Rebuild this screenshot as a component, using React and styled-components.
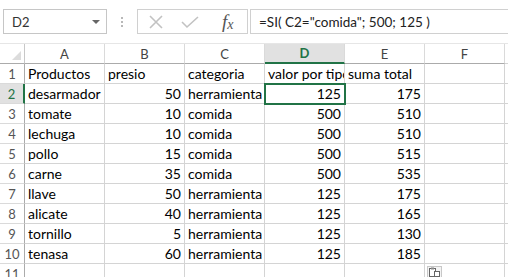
import React from 'react'
import styled, { createGlobalStyle } from 'styled-components'

const GlobalStyle = createGlobalStyle`
  html, body { margin: 0; padding: 0; background: #fff; }
  body { width: 508px; height: 277px; overflow: hidden; font-family: Lato, "Open Sans", sans-serif; }
`

const columns = ['A', 'B', 'C', 'D', 'E', 'F']

const rows = [
  ['Productos', 'presio', 'categoria', 'valor por tipo', 'suma total', ''],
  ['desarmador', 50, 'herramienta', 125, 175, ''],
  ['tomate', 10, 'comida', 500, 510, ''],
  ['lechuga', 10, 'comida', 500, 510, ''],
  ['pollo', 15, 'comida', 500, 515, ''],
  ['carne', 35, 'comida', 500, 535, ''],
  ['llave', 50, 'herramienta', 125, 175, ''],
  ['alicate', 40, 'herramienta', 125, 165, ''],
  ['tornillo', 5, 'herramienta', 125, 130, ''],
  ['tenasa', 60, 'herramienta', 125, 185, ''],
  ['', '', '', '', '', ''],
]

function App() {
  return (
    <Page>
      <GlobalStyle />
      <FormulaBar>
        <NameBox>
          <span>D2</span>
          <Caret />
        </NameBox>
        <Grip>
          <i /><i /><i />
        </Grip>
        <ActionBox>
          <Action>
            <svg width="18" height="14" viewBox="0 0 18 14">
              <path d="M3 1 L15 13 M15 1 L3 13" stroke="#c2c2c2" strokeWidth="1.6" fill="none" />
            </svg>
          </Action>
          <Action>
            <svg width="20" height="14" viewBox="0 0 20 14">
              <path d="M2 7 L7 12 L18 2" stroke="#c2c2c2" strokeWidth="1.6" fill="none" />
            </svg>
          </Action>
          <Fx>
            f<sub>x</sub>
          </Fx>
        </ActionBox>
        <FormulaInput>=SI( C2="comida"; 500; 125 )</FormulaInput>
      </FormulaBar>

      <Sheet>
        <Corner>
          <svg width="9" height="9" viewBox="0 0 9 9">
            <path d="M9 0 L9 9 L0 9 Z" fill="#dcdcdc" />
          </svg>
        </Corner>
        {columns.map((c) => (
          <ColHead key={c} $active={c === 'D'}>{c}</ColHead>
        ))}
        <Spacer />
        {rows.map((r, i) => (
          <React.Fragment key={i}>
            <RowHead $active={i === 1}>{i + 1}</RowHead>
            {r.map((v, j) => (
              <Cell key={j} $num={typeof v === 'number'}>
                {v}
              </Cell>
            ))}
            <Spacer />
          </React.Fragment>
        ))}
        <Selection />
        <PasteTag>
          <svg width="13" height="10" viewBox="0 0 13 10">
            <rect x="1.5" y="1.5" width="6" height="8" fill="#fff" stroke="#666" />
            <rect x="3" y="0.5" width="3" height="2" fill="#888" />
            <rect x="6.5" y="4.5" width="5" height="5" fill="#fff" stroke="#666" />
          </svg>
        </PasteTag>
      </Sheet>
    </Page>
  )
}

export default App

const Page = styled.div`
  width: 508px;
  height: 277px;
  overflow: hidden;
  background: #fff;
`

const FormulaBar = styled.div`
  height: 44px;
  display: flex;
  align-items: flex-start;
  padding-top: 9px;
  box-sizing: border-box;
  border-bottom: 1px solid #e6e6e6;
`

const NameBox = styled.div`
  margin-left: 3px;
  width: 104px;
  height: 25px;
  box-sizing: border-box;
  border: 1px solid #c6c6c6;
  display: flex;
  align-items: center;
  justify-content: space-between;
  padding: 0 6px 0 8px;
  font-size: 13px;
  color: #333;
`

const Caret = styled.span`
  width: 0;
  height: 0;
  border-left: 4px solid transparent;
  border-right: 4px solid transparent;
  border-top: 4px solid #666;
`

const Grip = styled.div`
  width: 30px;
  height: 25px;
  display: flex;
  flex-direction: column;
  align-items: center;
  justify-content: center;
  gap: 2px;
  i {
    width: 2px;
    height: 2px;
    background: #b8b8b8;
  }
`

const ActionBox = styled.div`
  width: 111px;
  height: 25px;
  box-sizing: border-box;
  border: 1px solid #d0d0d0;
  display: flex;
  align-items: center;
  padding-left: 6px;
  gap: 10px;
`

const Action = styled.span`
  display: flex;
  align-items: center;
  width: 24px;
  justify-content: center;
`

const Fx = styled.span`
  font-family: "Liberation Serif", serif;
  font-style: italic;
  font-size: 19px;
  color: #555;
  margin-left: 10px;
  line-height: 1;
  sub {
    font-size: 14px;
    vertical-align: -1px;
  }
`

const FormulaInput = styled.div`
  flex: 1;
  height: 25px;
  box-sizing: border-box;
  margin-left: 2px;
  border: 1px solid #d0d0d0;
  border-right: none;
  display: flex;
  align-items: center;
  padding-left: 8px;
  font-size: 13.5px;
  color: #222;
  white-space: nowrap;
`

const Sheet = styled.div`
  position: relative;
  display: grid;
  grid-template-columns: 25px repeat(6, 80px) 3px;
  grid-auto-rows: 20px;
`

const Corner = styled.div`
  border-right: 1px solid #c8c8c8;
  border-bottom: 1px solid #ababab;
  display: flex;
  align-items: flex-end;
  justify-content: flex-end;
  padding: 0 3px 3px 0;
`

const ColHead = styled.div`
  box-sizing: border-box;
  border-right: 1px solid #dadada;
  border-bottom: ${(p) => (p.$active ? '2px solid #217346' : '1px solid #ababab')};
  background: ${(p) => (p.$active ? '#e1e1e1' : '#fff')};
  color: ${(p) => (p.$active ? '#217346' : '#444')};
  font-weight: ${(p) => (p.$active ? 700 : 400)};
  font-size: 13px;
  display: flex;
  align-items: center;
  justify-content: center;
`

const Spacer = styled.div`
  border-bottom: 1px solid #d4d4d4;
`

const RowHead = styled.div`
  box-sizing: border-box;
  border-right: ${(p) => (p.$active ? '2px solid #217346' : '1px solid #ababab')};
  border-bottom: 1px solid #dadada;
  background: ${(p) => (p.$active ? '#e1e1e1' : '#fff')};
  color: ${(p) => (p.$active ? '#217346' : '#555')};
  font-size: 13px;
  display: flex;
  align-items: center;
  justify-content: center;
`

const Cell = styled.div`
  box-sizing: border-box;
  border-right: 1px solid #d4d4d4;
  border-bottom: 1px solid #d4d4d4;
  padding: 0 3px;
  font-size: 14px;
  color: #000;
  line-height: 20px;
  white-space: nowrap;
  overflow: hidden;
  text-align: ${(p) => (p.$num ? 'right' : 'left')};
`

const Selection = styled.div`
  position: absolute;
  left: 264px;
  top: 39px;
  width: 82px;
  height: 22px;
  box-sizing: border-box;
  border: 2px solid #217346;
  pointer-events: none;
`

const PasteTag = styled.div`
  position: absolute;
  left: 427px;
  top: 222px;
  width: 15px;
  height: 12px;
  box-sizing: border-box;
  border: 1px solid #c8c8c8;
  background: #f4f4f4;
  display: flex;
  align-items: center;
  justify-content: center;
`
